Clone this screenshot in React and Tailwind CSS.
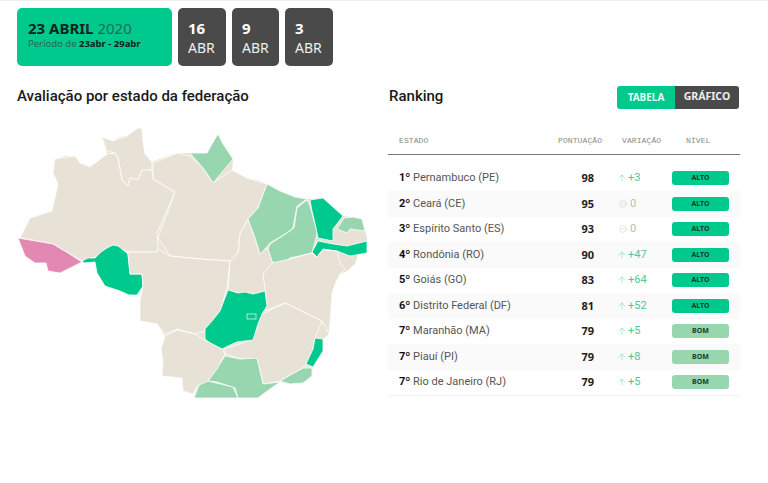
import { ArrowUp, MinusCircle } from "lucide-react";

const BEIGE = "#e8e2d6";
const GREEN = "#00c98d";
const LIGHT = "#98d6b0";
const PINK = "#e388b2";

// silhouette under the states so no white slivers show between them
const outline =
  "55,158 65,155 75,155 80,162 90,166 98,160 107,153 102,136 113,140 120,136 127,135 133,131 138,127 142,127 143,140 145,153 152,161 165,156 178,152 190,152 207,152 212,143 218,133 223,143 233,158 232,169 240,173 247,177 257,179 267,183 280,190 295,196 307,198 323,197 333,206 343,215 353,216 362,218 365,228 367,238 367,252 358,254 355,263 347,270 340,273 335,283 332,293 331,313 329,333 323,338 323,350 313,366 312,375 303,382 290,383 280,381 270,388 258,397 194,397 197,385 193,393 183,390 182,377 172,376 162,375 163,360 161,348 165,335 157,323 140,320 140,300 143,285 137,294 120,290 105,285 97,272 95,261 82,261 60,272 48,270 46,262 35,262 25,255 18,237 20,237 25,227 30,217 41,213 52,210 55,196 58,183 53,172";

const states = [
  ["RR", BEIGE, "102,136 113,140 127,135 138,127 142,127 143,140 145,153 152,161 152,169 142,169 138,179 130,177 128,185 122,179 118,157 115,152 107,150"],
  ["AM", BEIGE, "55,158 75,155 80,162 90,166 107,153 115,152 118,157 122,179 128,185 130,177 138,179 142,169 152,169 153,178 175,191 157,232 158,248 157,251 128,251 113,244 98,255 82,260 53,243 20,237 25,227 30,217 52,210 58,183 53,172"],
  ["AC", PINK, "18,237 36,240 53,243 68,252 82,261 72,266 60,272 48,270 46,262 35,262 25,255"],
  ["RO", GREEN, "82,260 88,257 95,257 101,251 107,247 113,244 118,245 122,248 128,253 129,263 130,273 142,273 143,285 137,294 129,294 120,290 105,285 97,272 95,261 84,262"],
  ["PA", BEIGE, "153,162 178,152 190,155 203,167 213,182 232,169 247,177 267,183 258,207 248,218 240,233 238,252 230,260 200,258 170,255 158,237 175,191 153,178"],
  ["AP", LIGHT, "190,152 207,152 212,143 218,133 223,143 233,158 223,170 213,182 208,174 203,167"],
  ["MT", BEIGE, "128,251 157,251 158,248 170,255 200,258 230,260 227,287 220,310 205,330 195,333 177,328 165,333 157,323 140,320 140,300 143,285 142,273 130,273 128,253"],
  ["TO", BEIGE, "248,218 255,237 260,253 265,248 268,248 272,260 277,268 263,273 267,290 253,293 238,292 228,289 230,260 238,252 240,233"],
  ["MA", LIGHT, "267,183 280,190 295,196 307,198 297,205 293,227 287,232 270,242 265,248 260,253 255,237 248,218 258,207"],
  ["PI", LIGHT, "307,199 310,205 316,227 317,233 312,252 290,257 277,268 272,260 268,248 270,243 287,232 294,227 297,207"],
  ["CE", GREEN, "310,199 323,197 333,206 343,215 333,228 333,240 318,237 316,227 312,210"],
  ["RN", LIGHT, "344,217 353,216 362,218 365,230 350,228 347,232 337,228"],
  ["PE", GREEN, "318,240 333,243 347,245 367,240 367,252 350,255 337,250 323,248 317,256 312,251"],
  ["BA", BEIGE, "272,262 290,258 312,252 317,256 323,249 337,250 340,262 345,268 340,273 335,283 332,293 329,333 322,320 285,302 265,310 267,303 263,273"],
  ["MG", BEIGE, "262,313 285,302 322,320 315,337 313,348 306,363 303,367 280,380 263,383 257,358 242,358 225,353 225,348 253,338 258,323"],
  ["GO", GREEN, "228,289 238,292 245,291 253,293 265,290 267,305 262,313 258,323 253,339 237,341 228,345 222,348 212,344 205,338 205,328 212,320 220,310"],
  ["ES", GREEN, "315,337 323,338 323,350 313,366 306,363 313,348"],
  ["RJ", LIGHT, "303,367 312,367 312,375 303,382 290,383 280,380"],
  ["SP", LIGHT, "225,355 240,358 257,357 263,383 280,381 270,388 258,397 238,397 235,387 217,381 208,380"],
  ["PR", LIGHT, "194,397 200,382 208,380 233,386 238,397"],
  ["MS", BEIGE, "165,335 177,329 195,333 203,338 222,348 225,353 217,368 208,380 197,385 193,393 183,390 182,377 162,375 163,360 161,348"],
];

const rows = [
  ["1º", "Pernambuco (PE)", 98, "+3", "ALTO"],
  ["2º", "Ceará (CE)", 95, "0", "ALTO"],
  ["3º", "Espírito Santo (ES)", 93, "0", "ALTO"],
  ["4º", "Rondônia (RO)", 90, "+47", "ALTO"],
  ["5º", "Goiás (GO)", 83, "+64", "ALTO"],
  ["6º", "Distrito Federal (DF)", 81, "+52", "ALTO"],
  ["7º", "Maranhão (MA)", 79, "+5", "BOM"],
  ["7º", "Piauí (PI)", 79, "+8", "BOM"],
  ["7º", "Rio de Janeiro (RJ)", 79, "+5", "BOM"],
];

function DayCard({ day, className }) {
  return (
    <div className={`h-[58px] rounded-[5px] bg-[#4a4a4a] pl-[10px] pt-[11px] text-white ${className}`}>
      <div className="text-[15px] font-bold leading-[18px]">{day}</div>
      <div className="mt-[2px] text-[14px] leading-[18px] text-[#eee]">ABR</div>
    </div>
  );
}

function Row({ rank, name, score, change, level, striped }) {
  const zero = change === "0";
  return (
    <div className={`flex h-[25.5px] items-center font-['Roboto',sans-serif] text-[11px] ${striped ? "bg-[#fafafa]" : ""}`}>
      <div className="w-[168px] pl-[11px] text-[#555] whitespace-nowrap">
        <span className="font-bold text-[#111]">{rank}</span> {name}
      </div>
      <div className="w-[38px] text-right font-['Noto_Sans',sans-serif] font-bold text-[#222]">{score}</div>
      <div className={`ml-[23px] flex w-[55px] items-center ${zero ? "gap-[3px] pl-[2px] text-[#bbb]" : "gap-px text-[#4cc79b]"}`}>
        {zero ? <MinusCircle size={8} strokeWidth={1.2} /> : <ArrowUp size={10} strokeWidth={1} />}
        <span>{change}</span>
      </div>
      <div
        className={`flex h-[14px] w-[57px] items-center justify-center rounded-[3px] font-['Noto_Sans',sans-serif] text-[7px] font-bold text-[#1c3b30] ${
          level === "ALTO" ? "bg-[#00c98d]" : "bg-[#98d6b0]"
        }`}
      >
        {level}
      </div>
    </div>
  );
}

export default function App() {
  return (
    <div className="h-[483px] w-[768px] overflow-hidden bg-white font-['Noto_Sans',sans-serif]">
      <div className="h-px bg-[#eee]" />
      <div className="flex gap-[6px] pl-[17px] pt-[7px]">
        <div className="h-[58px] w-[155px] rounded-[5px] bg-[#00c98d] pl-[11px] pt-[11px]">
          <div className="text-[15px] font-bold leading-[18px] text-[#10231c]">
            23 ABRIL <span className="font-normal text-[#1f6f55]">2020</span>
          </div>
          <div className="text-[9.5px] leading-[14px] text-[#1f6f55]">
            Período de <span className="font-bold text-[#10231c]">23abr - 29abr</span>
          </div>
        </div>
        <DayCard day="16" className="w-[48px]" />
        <DayCard day="9" className="w-[47px]" />
        <DayCard day="3" className="w-[48px]" />
      </div>

      <div className="flex pt-[20px]">
        <div className="w-[388px] pl-[17px]">
          <h2 className="font-['Roboto',sans-serif] text-[15px] font-medium leading-[20px] text-[#1a1a1a]">
            Avaliação por estado da federação
          </h2>
          <svg className="mt-[15px] block" width="352" height="280" viewBox="17 120 352 280">
            <polygon points={outline} fill={BEIGE} />
            {states.map(([id, fill, points]) => (
              <polygon key={id} points={points} fill={fill} stroke="#fff" strokeWidth="0.8" strokeLinejoin="round" />
            ))}
            <rect x="247" y="313" width="9" height="5" fill={GREEN} stroke="#d8f3e6" strokeWidth="0.8" />
          </svg>
        </div>

        <div className="w-[352px]">
          <div className="-mt-px flex h-[23px] items-center justify-between">
            <h2 className="pl-px font-['Roboto',sans-serif] text-[15px] font-medium text-[#1a1a1a]">Ranking</h2>
            <div className="mr-px mt-px flex h-[23px] w-[122px] overflow-hidden rounded-[3px] text-[10px] font-bold">
              <div className="flex w-[58px] items-center justify-center bg-[#00c98d] text-[#e6fff5]">TABELA</div>
              <div className="flex flex-1 items-center justify-center bg-[#4a4a4a] text-[10.5px] text-[#eee]">GRÁFICO</div>
            </div>
          </div>

          <div className="mt-[23px] flex h-[24px] items-start border-b border-[#777] pt-[4px] font-['Liberation_Mono',monospace] text-[8px] leading-[12px] tracking-[0.1px] text-[#888]">
            <div className="w-[170px] pl-[11px]">ESTADO</div>
            <div className="w-[64px]">PONTUAÇÃO</div>
            <div className="w-[64px]">VARIAÇÃO</div>
            <div>NÍVEL</div>
          </div>

          <div className="mt-[10.5px] border-b border-[#f4f4f4]">
            {rows.map(([rank, name, score, change, level], i) => (
              <Row key={name} rank={rank} name={name} score={score} change={change} level={level} striped={i % 2 === 1} />
            ))}
          </div>
        </div>
      </div>
    </div>
  );
}
